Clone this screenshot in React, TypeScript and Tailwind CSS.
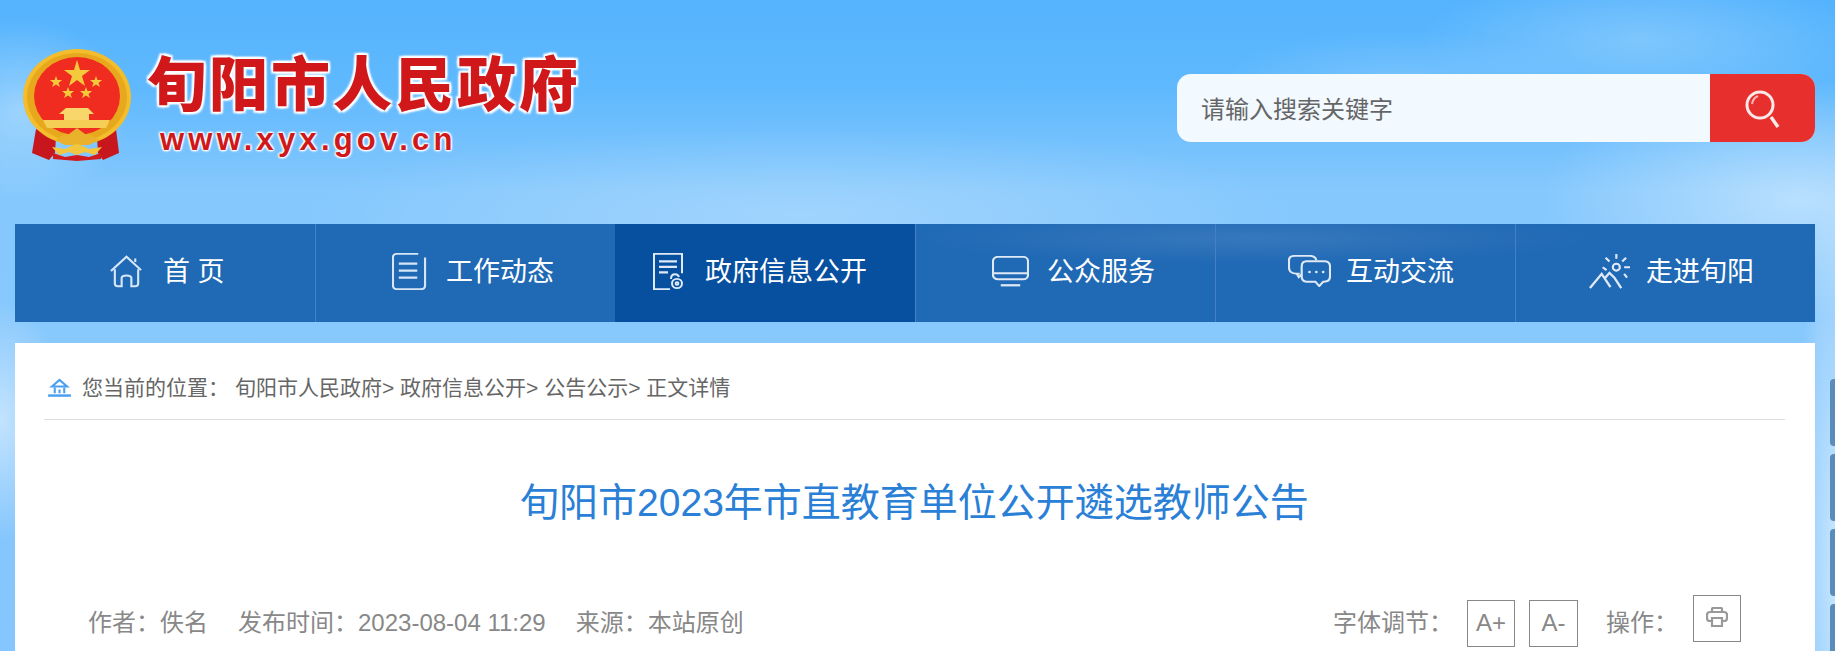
const FONT = "font-['Liberation_Sans','Noto_Sans_CJK_SC',sans-serif]";

function Emblem() {
  return (
    <svg width="108" height="112" viewBox="0 0 108 112" className="shrink-0">
      <path d="M13 80 L9 104 L26 111 L32 104 L33 88 Z" fill="#c8161d" />
      <path d="M93 80 L96 104 L80 111 L75 104 L74 88 Z" fill="#c8161d" />
      <path d="M30 104 L42 108 L54 106 L66 108 L78 104 L78 110 L54 112 L30 110 Z" fill="#cf1b20" />
      <ellipse cx="54" cy="48" rx="54" ry="48" fill="#f3bd2c" />
      <ellipse cx="54" cy="48" rx="50" ry="44" fill="#e8a81e" />
      <ellipse cx="54" cy="47" rx="43" ry="39" fill="#f02c20" />
      <polygon points="54,11 57,21 67,21 59,27 62,37 54,31 46,37 49,27 41,21 51,21" fill="#f4c93c" />
      <polygon points="33,27 34.5,31 39,31 35.5,34 37,38 33,35.5 29,38 30.5,34 27,31 31.5,31" fill="#f4c93c" />
      <polygon points="73,27 74.5,31 79,31 75.5,34 77,38 73,35.5 69,38 70.5,34 67,31 71.5,31" fill="#f4c93c" />
      <polygon points="45,38 46.5,42 51,42 47.5,45 49,49 45,46.5 41,49 42.5,45 39,42 43.5,42" fill="#f4c93c" />
      <polygon points="63,38 64.5,42 69,42 65.5,45 67,49 63,46.5 59,49 60.5,45 57,42 61.5,42" fill="#f4c93c" />
      <path d="M43 59 L65 59 L71 65 L66 65 L66 71 L41 71 L41 65 L36 65 Z" fill="#f8d66c" />
      <path d="M20 71 L87 71 L83 79 L24 79 Z" fill="#f5cf55" />
      <path d="M32 91 L40 86 L46 85 L54 79 L62 85 L68 86 L76 91 L66 96 L42 96 Z" fill="#e9b22a" />
      <path d="M29 98 L42 100 L48 97 L54 95 L60 97 L66 100 L79 98 L72 106 L62 103 L54 106 L46 103 L36 106 Z" fill="#f2c63e" />
    </svg>
  );
}

function HomeIcon() {
  return (
    <svg width="35" height="34" viewBox="0 0 36 38" preserveAspectRatio="none" fill="none" stroke="#d6e6f6" strokeWidth="2.2">
      <path d="M2 19 L18 3 L33 18" />
      <path d="M27 5 L27 9" />
      <path d="M6 17 L6 33 Q6 36 9 36 L13 36 L13 27 Q13 24 18 24 Q23 24 23 27 L23 36 L27 36 Q30 36 30 33 L30 17" />
    </svg>
  );
}
function DocIcon() {
  return (
    <svg width="35" height="37" viewBox="0 0 36 42" preserveAspectRatio="none" fill="none" stroke="#d6e6f6" strokeWidth="2.2">
      <path d="M27 1 L5 1 Q1 1 1 5 L1 37 Q1 41 5 41 L30 41 Q34 41 34 37 L34 5" />
      <path d="M7 12 L26 12 M7 20 L26 20 M7 28 L26 28" strokeWidth="2.6" />
    </svg>
  );
}
function OpenIcon() {
  return (
    <svg width="32" height="37" viewBox="0 0 32 40" preserveAspectRatio="none" fill="none" stroke="#dfeaf6" strokeWidth="2">
      <path d="M18 39 L2 39 L2 1 L30 1 L30 22" />
      <path d="M7 9 L25 9 M7 15 L25 15 M7 21 L16 21" strokeWidth="2.4" />
      <circle cx="25" cy="33" r="5" />
      <circle cx="25" cy="33" r="1.4" />
      <path d="M19 28 Q19 23 23 23 Q26 23 27 26" />
    </svg>
  );
}
function MonitorIcon() {
  return (
    <svg width="37" height="31" viewBox="0 0 38 36" preserveAspectRatio="none" fill="none" stroke="#dfeaf6" strokeWidth="2.2">
      <rect x="1" y="1" width="36" height="26" rx="5" />
      <path d="M1 20 L37 20" />
      <path d="M9 34 L29 34" strokeWidth="2.6" />
    </svg>
  );
}
function ChatIcon() {
  return (
    <svg width="43" height="32" viewBox="0 0 44 36" preserveAspectRatio="none" fill="none" stroke="#dfeaf6" strokeWidth="2.2">
      <path d="M12 21 L9 21 Q1 21 1 14 L1 6 Q1 1 7 1 L22 1 Q28 1 29 6" />
      <path d="M9 21 L11 25 L14 22" />
      <path d="M19 7 L37 7 Q43 7 43 13 L43 24 Q43 30 37 30 L36 30 L32 35 L28 30 L19 30 Q14 30 14 24 L14 13 Q14 7 19 7 Z" />
      <circle cx="22" cy="19" r="1.4" fill="#dfeaf6" stroke="none" />
      <circle cx="29" cy="19" r="1.4" fill="#dfeaf6" stroke="none" />
      <circle cx="36" cy="19" r="1.4" fill="#dfeaf6" stroke="none" />
    </svg>
  );
}
function SunIcon() {
  return (
    <svg width="41" height="36" viewBox="0 0 42 38" preserveAspectRatio="none" fill="none" stroke="#dfeaf6" strokeWidth="2.2">
      <path d="M1 37 L13 22 L22 36 M16 27 L21 21 L26 26 L33 37" strokeWidth="2.4" />
      <circle cx="28" cy="15" r="3.6" />
      <path d="M28 1 L28 6 M38 5 L34 9 M42 15 L36 15 M17 5 L21 9 M18 18 L14 15 M36 22 L39 26" />
    </svg>
  );
}
function SearchIcon() {
  return (
    <svg width="36" height="42" viewBox="0 0 36 42" fill="none">
      <circle cx="15" cy="16" r="13" stroke="#fbe9e8" strokeWidth="3" />
      <path d="M7 15 Q8 9 13 7" stroke="#f7b8b6" strokeWidth="2" />
      <path d="M26 28 L33 38" stroke="#fbe9e8" strokeWidth="3.4" />
    </svg>
  );
}
function BreadHome() {
  return (
    <svg width="23" height="19" viewBox="0 0 24 20" fill="none" stroke="#4a9ff0" strokeWidth="2.2">
      <path d="M4 9 L12 2 L20 9 Z" />
      <path d="M7 16 L7 10 M12 16 L12 12 M17 16 L17 10" />
      <path d="M0 18.5 L24 18.5" strokeWidth="2.6" />
    </svg>
  );
}
function PrintIcon() {
  return (
    <svg width="22" height="20" viewBox="0 0 22 20" fill="none" stroke="#999" strokeWidth="2.2">
      <path d="M6 5 L6 2 Q6 1 7 1 L15 1 Q16 1 16 2 L16 5" />
      <rect x="1" y="5" width="20" height="9" rx="3" />
      <path d="M6 11 L16 11 L16 19 L6 19 Z" fill="#fff" />
    </svg>
  );
}

const NAV = [
  { label: "首 页", Icon: HomeIcon, cls: "pl-[89px]" },
  { label: "工作动态", Icon: DocIcon, cls: "pl-[71px] border-l border-[#4581c2]" },
  { label: "政府信息公开", Icon: OpenIcon, cls: "pl-[31px] bg-[#0750a0]" },
  { label: "公众服务", Icon: MonitorIcon, cls: "pl-[72px] border-l border-[#4581c2]" },
  { label: "互动交流", Icon: ChatIcon, cls: "pl-[71px] border-l border-[#4581c2]" },
  { label: "走进旬阳", Icon: SunIcon, cls: "pl-[71px] border-l border-[#4581c2]" },
];

export default function App() {
  return (
    <div
      className={`relative h-[651px] overflow-hidden ${FONT} bg-[radial-gradient(ellipse_70px_120px_at_0px_420px,rgba(255,255,255,0.5),transparent),radial-gradient(ellipse_110px_90px_at_20px_110px,rgba(255,255,255,0.35),transparent),radial-gradient(ellipse_40px_380px_at_1835px_560px,rgba(255,255,255,0.55),transparent),radial-gradient(ellipse_260px_120px_at_1800px_200px,rgba(255,255,255,0.42),transparent),radial-gradient(ellipse_500px_90px_at_800px_215px,rgba(255,255,255,0.22),transparent),radial-gradient(ellipse_220px_70px_at_1640px_40px,rgba(255,255,255,0.22),transparent),radial-gradient(ellipse_180px_50px_at_1400px_80px,rgba(255,255,255,0.15),transparent),linear-gradient(180deg,#54b3fd_0px,#60b9fd_90px,#85c8fd_190px,#87c8fd_340px,#84c6fd_651px)]`}
    >
      <header className="flex h-[224px] items-start justify-between pl-[23px] pr-[20px]">
        <div className="flex pt-[49px]">
          <Emblem />
          <div className="ml-[16px] flex flex-col">
            <div className="mt-[1px] text-[59px] leading-[72px] font-black tracking-[3px] text-[#d0181b] [text-shadow:0_0_3px_#fff,0_0_3px_#fff,2px_2px_2px_#fff,-2px_-2px_2px_#fff,2px_-2px_2px_#fff,-2px_2px_2px_#fff]">
              旬阳市人民政府
            </div>
            <div className="ml-[13px] text-[31px] leading-[36px] font-bold tracking-[4.2px] text-[#d0181b] [text-shadow:0_0_2px_#fff,1px_1px_2px_#fff,-1px_-1px_2px_#fff,1px_-1px_2px_#fff,-1px_1px_2px_#fff]">
              www.xyx.gov.cn
            </div>
          </div>
        </div>
        <div className="mt-[74px] flex h-[68px] w-[638px] overflow-hidden rounded-[14px] bg-[#f2f9ff]">
          <div className="flex flex-1 items-center pl-[24px] pt-[4px] text-[24px] text-[#666]">请输入搜索关键字</div>
          <div className="flex w-[105px] items-center justify-center bg-[#e72f2e] pt-[4px]">
            <SearchIcon />
          </div>
        </div>
      </header>

      <nav className="ml-[15px] mr-[20px] grid h-[98px] grid-cols-6 bg-[#2069b5] bg-[radial-gradient(ellipse_340px_26px_at_1240px_14px,rgba(255,255,255,0.1),transparent)]">
        {NAV.map(({ label, Icon, cls }) => (
          <div key={label} className={`flex items-center pb-[1px] whitespace-pre text-[27px] text-white ${cls}`}>
            <span className="mr-[15px] flex w-[44px] justify-center pb-[3px]">
              <Icon />
            </span>
            {label}
          </div>
        ))}
      </nav>

      <main className="ml-[15px] mr-[20px] mt-[21px] h-[308px] bg-white pl-[29px] pr-[30px]">
        <div className="flex h-[77px] items-center border-b border-[#dddddd] pt-[13px] text-[21px] text-[#666]">
          <span className="ml-[4px] mr-[11px]"><BreadHome /></span>
          <span className="mr-[6px]">您当前的位置：</span>
          <span>旬阳市人民政府&gt; 政府信息公开&gt; 公告公示&gt; 正文详情</span>
        </div>
        <h1 className="mt-[58px] text-center text-[39px] leading-[50px] font-normal text-[#2a7fd6]">
          旬阳市2023年市直教育单位公开遴选教师公告
        </h1>
        <div className="mt-[67px] flex items-center pl-[44px] text-[24px] leading-[30px] text-[#888]">
          <span>作者：佚名</span>
          <span className="ml-[30px]">发布时间：2023-08-04 11:29</span>
          <span className="ml-[30px]">来源：本站原创</span>
          <span className="ml-auto">字体调节：</span>
          <span className="ml-[14px] flex h-[47px] w-[48px] items-center justify-center border border-[#888]">A+</span>
          <span className="ml-[14px] flex h-[47px] w-[49px] items-center justify-center border border-[#888]">A-</span>
          <span className="ml-[28px]">操作：</span>
          <span className="ml-[15px] mb-[9px] mr-[44px] flex h-[47px] w-[48px] items-center justify-center border border-[#888] pb-[4px]">
            <PrintIcon />
          </span>
        </div>
      </main>

      <aside className="absolute right-0 top-[379px] flex w-[5px] flex-col gap-[8px]">
        <div className="h-[67px] rounded-l-[4px] bg-[#5a8cba]" />
        <div className="h-[67px] rounded-l-[4px] bg-[#5a8cba]" />
        <div className="h-[67px] rounded-l-[4px] bg-[#5a8cba]" />
        <div className="h-[67px] rounded-l-[4px] bg-[#5a8cba]" />
      </aside>
    </div>
  );
}
